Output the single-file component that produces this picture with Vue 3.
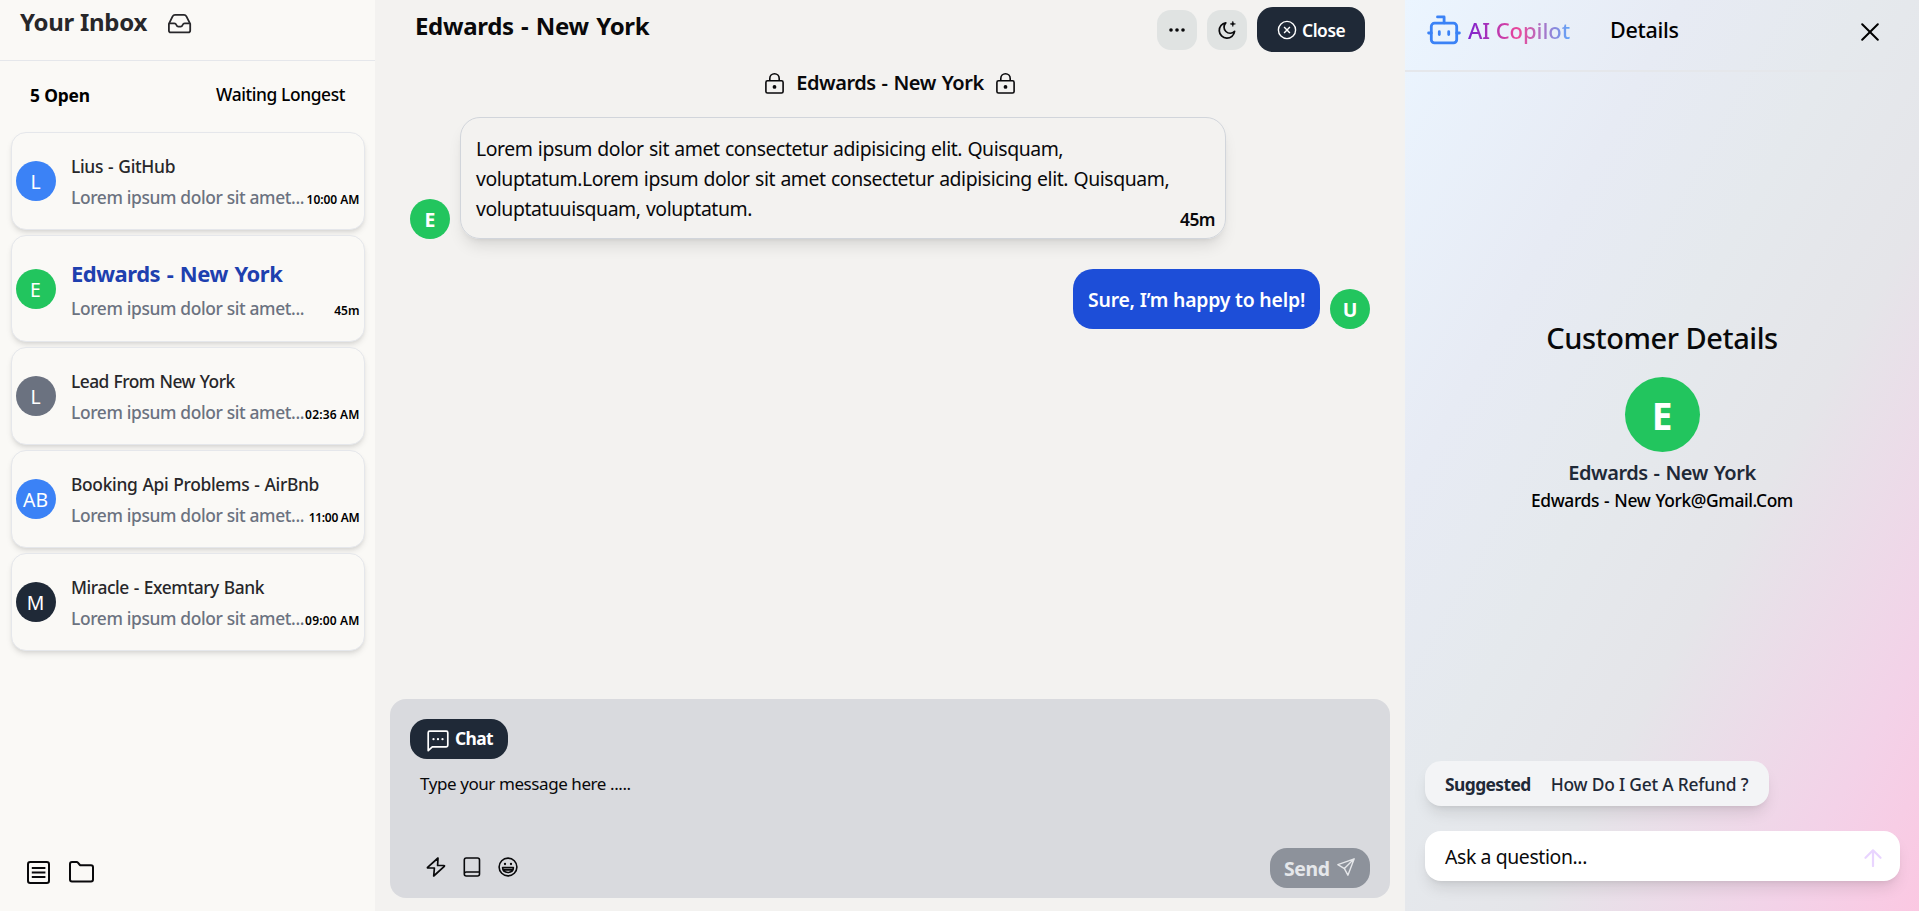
<script setup>
const conversations = [
  { initials: 'L', name: 'Lius - GitHub', time: '10:00 AM', tone: 'blue', tracking: -0.32, timeTracking: -0.02 },
  { initials: 'E', name: 'Edwards - New York', time: '45m', tone: 'green', tracking: -0.5, timeTracking: 0, active: true },
  { initials: 'L', name: 'Lead From New York', time: '02:36 AM', tone: 'gray', tracking: -0.54, timeTracking: 0.16 },
  { initials: 'AB', name: 'Booking Api Problems - AirBnb', time: '11:00 AM', tone: 'blue', tracking: -0.33, timeTracking: -0.28 },
  { initials: 'M', name: 'Miracle - Exemtary Bank', time: '09:00 AM', tone: 'dark', tracking: -0.42, timeTracking: 0.16 },
]
</script>

<template>
  <div class="app">
    <aside class="inbox">
      <header class="inbox-head">
        <h1>Your Inbox</h1>
        <svg width="24" height="20" viewBox="0 0 24 20" fill="none" stroke="currentColor" stroke-width="1.8" stroke-linejoin="round">
          <path d="M.9 9.8 4.6 2.4Q5.4.9 7 .9h9Q17.6.9 18.4 2.4l3.8 7.4v6.6q0 1.9-1.9 1.9H2.8Q.9 18.3.9 16.4Z" />
          <path d="M.9 9.3h5.4c1.3 0 1.7.7 2.1 1.7.4 1.1.9 1.7 2 1.7h2.2c1.1 0 1.6-.6 2-1.7.4-1 .8-1.7 2.1-1.7h5.4" />
        </svg>
      </header>
      <div class="filters">
        <span class="open">5 Open</span>
        <span class="sort">Waiting Longest</span>
      </div>
      <div class="list">
        <article v-for="c in conversations" :key="c.name" class="card" :class="{ active: c.active }">
          <span class="avatar" :class="c.tone">{{ c.initials }}</span>
          <div class="body">
            <div class="name" :style="{ letterSpacing: c.tracking + 'px' }">{{ c.name }}</div>
            <div class="row">
              <span class="preview">Lorem ipsum dolor sit amet...</span>
              <span class="time" :style="{ letterSpacing: c.timeTracking + 'px' }">{{ c.time }}</span>
            </div>
          </div>
        </article>
      </div>
      <footer class="inbox-foot">
        <svg width="23" height="23" viewBox="0 0 23 23" fill="none" stroke="currentColor" stroke-width="2">
          <rect x="1" y="1" width="21" height="21" rx="2.2" />
          <path d="M4.8 6.9h13.6M4.8 11.4h13.6M4.8 15.9h13.6" />
        </svg>
        <svg width="25" height="22" viewBox="0 0 25 22" fill="none" stroke="currentColor" stroke-width="2" stroke-linejoin="round">
          <path d="M1 3q0-2 2-2h4.6q.8 0 1.3.6l2 2.4q.3.3.8.3H22q2 0 2 2V18.5q0 2-2 2H3q-2 0-2-2Z" />
        </svg>
      </footer>
    </aside>

    <main class="chat">
      <header class="chat-head">
        <h2>Edwards - New York</h2>
        <div class="actions">
          <button class="icon-btn">
            <svg width="16" height="4" viewBox="0 0 16 4" fill="currentColor"><circle cx="2" cy="2" r="1.8" /><circle cx="8" cy="2" r="1.8" /><circle cx="14" cy="2" r="1.8" /></svg>
          </button>
          <button class="icon-btn">
            <svg width="20" height="20" viewBox="0 0 20 20" fill="none" stroke="currentColor" stroke-width="1.7" stroke-linejoin="round">
              <path d="M8.8 2.8A7.7 7.7 0 1 0 17.6 11.4 5.9 5.9 0 0 1 8.8 2.8Z" />
              <path d="M15.8 1.2c.3 1.7 1 2.4 2.7 2.7-1.7.3-2.4 1-2.7 2.7-.3-1.7-1-2.4-2.7-2.7 1.7-.3 2.4-1 2.7-2.7Z" fill="currentColor" stroke-width=".5" />
            </svg>
          </button>
          <button class="close-btn">
            <svg width="20" height="20" viewBox="0 0 20 20" fill="none" stroke="currentColor" stroke-width="1.4"><circle cx="10" cy="10" r="8.6" /><path d="m7.1 7.1 5.8 5.8M12.9 7.1l-5.8 5.8" /></svg>
            <span>Close</span>
          </button>
        </div>
      </header>

      <div class="subject">
        <svg v-for="n in 2" :key="n" :class="'lock' + n" width="19" height="21" viewBox="0 0 19 21" fill="none" stroke="currentColor" stroke-width="1.6">
          <rect x=".9" y="7.8" width="17.2" height="12.2" rx="1.6" />
          <path d="M4.8 7.8V5.5a4.7 4.7 0 0 1 9.4 0v2.3" />
          <circle cx="9.5" cy="13.9" r="1.1" fill="currentColor" />
        </svg>
        <span>Edwards - New York</span>
      </div>

      <div class="thread">
        <div class="msg incoming">
          <span class="avatar green bold">E</span>
          <div class="bubble">
            <p>Lorem ipsum dolor sit amet consectetur adipisicing elit. Quisquam,<br>voluptatum.Lorem ipsum dolor sit amet consectetur adipisicing elit. Quisquam,<br>voluptatuuisquam, voluptatum.</p>
            <span class="stamp">45m</span>
          </div>
        </div>
        <div class="msg outgoing">
          <div class="bubble">Sure, I’m happy to help!</div>
          <span class="avatar green bold">U</span>
        </div>
      </div>

      <section class="composer">
        <button class="chat-btn">
          <svg width="22" height="22" viewBox="0 0 22 22" fill="none" stroke="currentColor" stroke-width="1.7" stroke-linejoin="round">
            <path d="M1.2 20.6V2.7Q1.2 1.2 2.7 1.2h16.6q1.5 0 1.5 1.5V15.3q0 1.5-1.5 1.5H5.3Z" />
            <g fill="currentColor" stroke="none"><circle cx="6.5" cy="9.2" r="1.15" /><circle cx="11" cy="9.2" r="1.15" /><circle cx="15.5" cy="9.2" r="1.15" /></g>
          </svg>
          <span>Chat</span>
        </button>
        <p class="placeholder">Type your message here .....</p>
        <div class="tools">
          <div class="tool-icons">
            <svg width="20" height="20" viewBox="0 0 20 20" fill="none" stroke="currentColor" stroke-width="1.7" stroke-linejoin="round">
              <path d="M12 1 1.6 10.3q-.5.7.4.7h6.4L7.7 19 18.3 9.3q.5-.8-.4-.8h-6.3Z" />
            </svg>
            <svg width="18" height="20" viewBox="0 0 18 20" fill="none" stroke="currentColor" stroke-width="1.6">
              <path d="M1.3 17V3.1Q1.3 1 3.3 1h11.2q2 0 2 2v14q0 2-2 2H3.3q-2 0-2-2t2-2h13.2" />
            </svg>
            <svg width="20" height="20" viewBox="0 0 20 20" fill="none" stroke="currentColor" stroke-width="1.6" stroke-linejoin="round">
              <circle cx="10" cy="10" r="8.9" />
              <path d="M4.6 10.6h10.8q0 4.9-5.4 4.9t-5.4-4.9ZM5.2 12.9h9.6" />
              <g fill="currentColor" stroke="none"><circle cx="7" cy="7" r="1.15" /><circle cx="13" cy="7" r="1.15" /></g>
            </svg>
          </div>
          <button class="send-btn">
            <span>Send</span>
            <svg width="18" height="18" viewBox="0 0 18 18" fill="none" stroke="currentColor" stroke-width="1.4" stroke-linejoin="round">
              <path d="M17.2.8.9 6.7l6.5 3.9L10.9 17.2ZM17.2.8 7.4 10.6" />
            </svg>
          </button>
        </div>
      </section>
    </main>

    <aside class="copilot">
      <header class="copilot-head">
        <svg width="34" height="30" viewBox="0 0 34 30" fill="none" stroke="currentColor" stroke-width="2.8" stroke-linecap="round" stroke-linejoin="round">
          <path d="M10.5 1.9h6.6v6" />
          <rect x="4.3" y="8.2" width="25.4" height="19.7" rx="3.2" />
          <path d="M1.6 18h2.7M29.7 18h2.7M12.3 16.7v2.8M21.7 16.7v2.8" />
        </svg>
        <span class="brand">AI Copilot</span>
        <span class="tab">Details</span>
        <svg class="dismiss" width="18" height="18" viewBox="0 0 18 18" fill="none" stroke="currentColor" stroke-width="2" stroke-linecap="round"><path d="m1.2 1.2 15.6 15.6M16.8 1.2 1.2 16.8" /></svg>
      </header>

      <section class="customer">
        <h3>Customer Details</h3>
        <span class="big-avatar">E</span>
        <strong>Edwards - New York</strong>
        <span class="email">Edwards - New York@Gmail.Com</span>
      </section>

      <footer class="ask">
        <div class="suggest"><b>Suggested</b><span>How Do I Get A Refund ?</span></div>
        <div class="question">
          <span>Ask a question...</span>
          <svg width="18" height="18" viewBox="0 0 18 18" fill="none" stroke="currentColor" stroke-width="2.2" stroke-linecap="round" stroke-linejoin="round"><path d="M9 17V1.5M1.5 8.8 9 1.3l7.5 7.5" /></svg>
        </div>
      </footer>
    </aside>
  </div>
</template>

<style>
body {
  overflow: hidden;
}
</style>

<style scoped>
* {
  box-sizing: border-box;
}
.app {
  display: grid;
  grid-template-columns: 375px 1030px 514px;
  width: 1919px;
  height: 911px;
  font-family: 'Noto Sans', 'Open Sans', sans-serif;
  color: #09090b;
  white-space: nowrap;
}
h1,
h2,
h3,
p {
  margin: 0;
}
svg {
  display: block;
  flex: none;
}
button {
  border: 0;
  padding: 0;
  font: inherit;
  color: inherit;
  display: flex;
  align-items: center;
}

.avatar {
  display: flex;
  align-items: center;
  justify-content: center;
  flex: none;
  width: 40px;
  height: 40px;
  padding-top: 1px;
  border-radius: 50%;
  color: #fff;
  font-size: 19.4px;
}
.avatar.bold {
  font-weight: 700;
}
.blue {
  background: #3b82f6;
}
.green {
  background: #22c55e;
}
.gray {
  background: #6b7280;
}
.dark {
  background: #1f2937;
}

.inbox {
  display: flex;
  flex-direction: column;
  background: #faf9f6;
}
.inbox-head {
  display: flex;
  align-items: flex-start;
  gap: 21px;
  height: 61px;
  padding: 6px 0 0 20px;
  border-bottom: 1px solid #e5e7eb;
  color: #27272a;
}
.inbox-head h1 {
  font-size: 24px;
  line-height: 32px;
  letter-spacing: -0.29px;
}
.inbox-head svg {
  margin-top: 8px;
}
.filters {
  display: flex;
  justify-content: space-between;
  align-items: center;
  height: 71px;
  padding: 0 30px 4px;
  font-size: 17.4px;
  line-height: 28px;
  color: #000;
}
.open {
  font-weight: 700;
  letter-spacing: -0.15px;
}
.sort {
  font-weight: 500;
  letter-spacing: -0.4px;
  padding-bottom: 2px;
}
.list {
  display: flex;
  flex-direction: column;
  gap: 5px;
  padding: 0 10.5px;
}
.card {
  display: flex;
  align-items: center;
  gap: 15.5px;
  height: 98px;
  padding: 0 4px;
  border: 1px solid #e5e7eb;
  border-radius: 15px;
  background: #faf9f6;
  box-shadow: 0 4px 6px -1px rgba(0, 0, 0, 0.1), 0 2px 4px -2px rgba(0, 0, 0, 0.1);
}
.card.active {
  height: 107px;
}
.body {
  flex: 1;
  min-width: 0;
  padding-top: 3px;
}
.name {
  font-size: 17.4px;
  font-weight: 500;
  line-height: 31px;
  word-spacing: 0.8px;
  color: #27272a;
}
.active .name {
  font-size: 22px;
  font-weight: 700;
  line-height: 39.5px;
  word-spacing: 1.4px;
  color: #1e40af;
}
.row {
  display: flex;
  justify-content: space-between;
  align-items: baseline;
  line-height: 31px;
}
.preview {
  width: 232px;
  font-size: 17.4px;
  font-weight: 500;
  letter-spacing: -0.37px;
  color: #6b7280;
}
.time {
  font-size: 12px;
  font-weight: 600;
  color: #000;
}
.inbox-foot {
  display: flex;
  gap: 19px;
  margin-top: auto;
  padding: 0 0 27px 27px;
}

.chat {
  display: flex;
  flex-direction: column;
  background: #f3f2f0;
}
.chat-head {
  display: flex;
  justify-content: space-between;
  height: 60px;
  padding: 0 40px 1px;
}
.chat-head h2 {
  margin-top: 10px;
  font-size: 24px;
  line-height: 32px;
  letter-spacing: -0.33px;
  word-spacing: 1.5px;
}
.actions {
  display: flex;
  align-items: center;
  gap: 10px;
}
.icon-btn {
  justify-content: center;
  width: 40px;
  height: 40px;
  border-radius: 14px;
  background: #e0e3e2;
}
.close-btn {
  gap: 5px;
  width: 108px;
  height: 45px;
  padding-left: 20px;
  border-radius: 16px;
  background: #1f2937;
  color: #fff;
  font-size: 17.4px;
  font-weight: 600;
  letter-spacing: -0.45px;
}
.subject {
  display: flex;
  justify-content: center;
  align-items: center;
  gap: 12px;
  height: 57px;
  padding-bottom: 11px;
  font-size: 20px;
  font-weight: 600;
  letter-spacing: -0.47px;
  word-spacing: 1.2px;
  line-height: 28px;
}
.subject svg {
  margin-top: 1px;
}
.lock2 {
  order: 3;
}
.thread {
  display: flex;
  flex-direction: column;
  gap: 30px;
  padding: 0 35px;
}
.msg {
  display: flex;
  align-items: flex-end;
  gap: 10px;
}
.outgoing {
  justify-content: flex-end;
}
.incoming .bubble {
  position: relative;
  width: 766px;
  height: 122px;
  padding: 16px 15px;
  border: 1px solid #d1d5db;
  border-radius: 20px;
  box-shadow: 0 10px 15px -3px rgba(0, 0, 0, 0.1), 0 4px 6px -4px rgba(0, 0, 0, 0.1);
  font-size: 19.4px;
  line-height: 30px;
  letter-spacing: -0.42px;
  word-spacing: 0.7px;
}
.stamp {
  position: absolute;
  right: 10px;
  bottom: 4px;
  font-size: 17.4px;
  font-weight: 600;
  letter-spacing: -0.55px;
}
.outgoing .bubble {
  display: flex;
  align-items: center;
  width: 247px;
  height: 60px;
  padding: 1px 0 0 15px;
  border-radius: 20px;
  background: #1d4ed8;
  color: #fff;
  font-size: 19.4px;
  font-weight: 600;
  letter-spacing: -0.2px;
}
.composer {
  display: flex;
  flex-direction: column;
  align-items: stretch;
  height: 199px;
  margin: auto 15px 13px;
  padding: 20px 20px 10px;
  border-radius: 16px;
  background: #d9dade;
}
.chat-btn {
  align-self: flex-start;
  gap: 6px;
  width: 98px;
  height: 40px;
  padding-left: 17px;
  border-radius: 17px;
  background: #1f2937;
  color: #fff;
  font-size: 17.4px;
  font-weight: 700;
  letter-spacing: -0.64px;
}
.chat-btn svg {
  margin-top: 4px;
}
.chat-btn span {
  margin-top: -2px;
}
.placeholder {
  margin: 11px 0 0 10px;
  font-size: 17px;
  line-height: 28px;
  letter-spacing: -0.42px;
}
.tools {
  display: flex;
  justify-content: space-between;
  align-items: center;
  margin-top: auto;
}
.tool-icons {
  display: flex;
  gap: 17px;
  padding: 0 0 2px 16px;
}
.send-btn {
  gap: 7px;
  width: 100px;
  height: 40px;
  padding-left: 14px;
  border-radius: 17px;
  background: #8d929b;
  color: #e5e7ea;
  font-size: 19.4px;
  font-weight: 700;
  letter-spacing: -0.35px;
}
.send-btn svg {
  margin-bottom: 2px;
}
.send-btn span {
  margin-top: 1px;
}

.copilot {
  display: flex;
  flex-direction: column;
  background: linear-gradient(to bottom right, #ebf5ff, #e7ebf4 27%, #e5e9ed 45%, #e5e5e9 62%, #f3d2e8 86%, #fbc8e2);
}
.copilot-head {
  display: flex;
  align-items: center;
  height: 72px;
  padding: 0 40px 10px 22px;
  border-bottom: 2px solid #e5e7eb;
  font-weight: 500;
  line-height: 32px;
}
.copilot-head svg {
  color: #3b82f6;
}
.brand {
  margin-left: 7px;
  font-size: 22px;
  letter-spacing: -0.07px;
  background: linear-gradient(to right, #7e22ce, #ec4899, #60a5fa);
  background-clip: text;
  -webkit-background-clip: text;
  color: transparent;
}
.tab {
  margin-left: 40px;
  font-size: 21.5px;
  letter-spacing: -0.28px;
  color: #000;
}
.copilot-head .dismiss {
  margin: 4px 0 0 auto;
  color: #000;
}
.customer {
  display: flex;
  flex-direction: column;
  align-items: center;
  margin-top: 246px;
}
.customer h3 {
  font-size: 29px;
  font-weight: 500;
  line-height: 40px;
  letter-spacing: -0.45px;
}
.big-avatar {
  display: flex;
  align-items: center;
  justify-content: center;
  width: 75px;
  height: 75px;
  margin: 19px 0 7px;
  padding-top: 2px;
  border-radius: 50%;
  background: #22c55e;
  color: #fff;
  font-size: 37px;
  font-weight: 700;
}
.customer strong {
  font-size: 20px;
  font-weight: 600;
  line-height: 28px;
  letter-spacing: -0.47px;
  word-spacing: 1.2px;
  color: #1f2937;
}
.email {
  margin-top: -1px;
  font-size: 17.4px;
  font-weight: 500;
  line-height: 28px;
  letter-spacing: -0.4px;
  word-spacing: 1px;
  color: #000;
}
.ask {
  display: flex;
  flex-direction: column;
  align-items: flex-start;
  gap: 25px;
  margin-top: auto;
  padding: 0 19px 30px 20px;
}
.suggest,
.question {
  display: flex;
  align-items: center;
  border-radius: 16px;
  box-shadow: 0 10px 15px -3px rgba(0, 0, 0, 0.1), 0 4px 6px -4px rgba(0, 0, 0, 0.1);
}
.suggest {
  gap: 20px;
  width: 344px;
  height: 45px;
  padding-left: 20px;
  background: #f3f4f6;
  color: #1f2937;
  font-size: 17.4px;
  font-weight: 500;
  letter-spacing: -0.2px;
}
.suggest b {
  font-weight: 700;
  letter-spacing: -0.58px;
}
.question {
  justify-content: space-between;
  width: 475px;
  height: 50px;
  padding: 0 18px 0 20px;
  background: #fff;
  font-size: 19.4px;
  letter-spacing: -0.38px;
}
.question svg {
  color: #e9d5ff;
  margin-top: 4px;
}
</style>
